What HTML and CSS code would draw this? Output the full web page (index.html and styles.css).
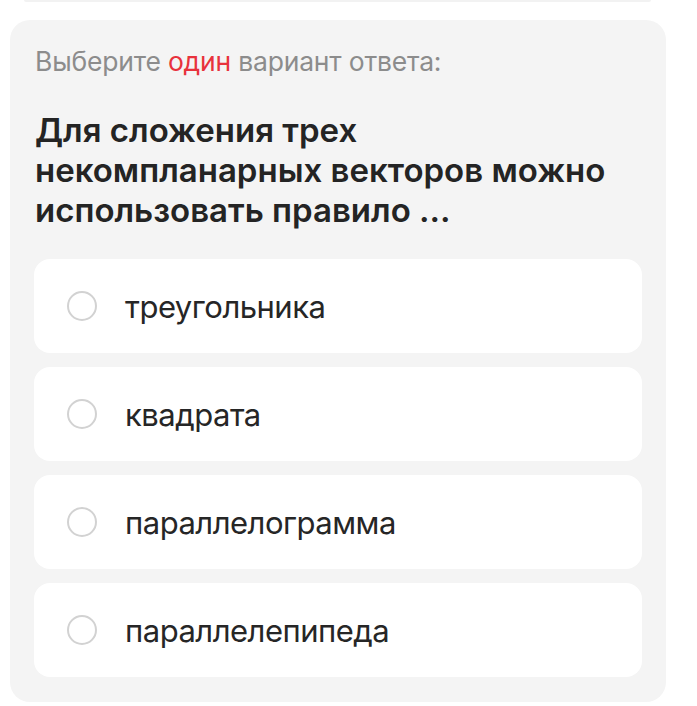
FILE: index.html
```html
<!DOCTYPE html>
<html lang="ru">
<head>
<meta charset="utf-8">
<title>Тест</title>
<link rel="stylesheet" href="styles.css">
</head>
<body>
<div class="prev-edge"></div>
<section class="quiz">
  <p class="hint">Выберите <span class="accent">один</span> вариант ответа:</p>
  <h2 class="question">Для сложения трех<br>некомпланарных векторов можно<br>использовать правило ...</h2>
  <div class="options">
    <label class="option"><span class="radio"></span><span class="option-text">треугольника</span></label>
    <label class="option"><span class="radio"></span><span class="option-text">квадрата</span></label>
    <label class="option"><span class="radio"></span><span class="option-text">параллелограмма</span></label>
    <label class="option"><span class="radio"></span><span class="option-text">параллелепипеда</span></label>
  </div>
</section>
</body>
</html>
```

FILE: styles.css
```css
html, body {
  margin: 0;
  padding: 0;
  background: #ffffff;
}

body {
  width: 697px;
  height: 706px;
  overflow: hidden;
  font-family: "Inter", "Noto Sans", sans-serif;
  color: #222222;
}

.prev-edge {
  margin: 0 46px 0 24px;
  height: 2px;
  background: #f2f2f2;
  border-radius: 0 0 2px 2px;
}

.quiz {
  margin: 18px 31px 0 10px;
  background: #f4f4f4;
  border-radius: 20px;
  padding: 22px 24px 24px 24px;
  height: 682px;
  box-sizing: border-box;
}

.hint {
  margin: 0;
  font-size: 26.5px;
  line-height: 38px;
  color: #8c8c8c;
  padding-left: 1px;
  letter-spacing: -0.2px;
}

.accent {
  color: #e8323c;
}

.question {
  margin: 30px 0 0 0;
  font-size: 33px;
  line-height: 40px;
  font-weight: 600;
  color: #242424;
  padding-left: 1px;
  white-space: nowrap;
}

.options {
  margin-top: 29px;
  display: flex;
  flex-direction: column;
  gap: 14px;
}

.option {
  display: flex;
  align-items: center;
  height: 94px;
  background: #ffffff;
  border-radius: 16px;
  padding-left: 33px;
  box-sizing: border-box;
}

.radio {
  width: 30px;
  height: 30px;
  box-sizing: border-box;
  border: 2px solid #d2d2d2;
  border-radius: 50%;
  background: #ffffff;
  flex: none;
}

.option-text {
  margin-left: 28px;
  font-size: 31px;
  letter-spacing: -0.5px;
  color: #262626;
}
```
